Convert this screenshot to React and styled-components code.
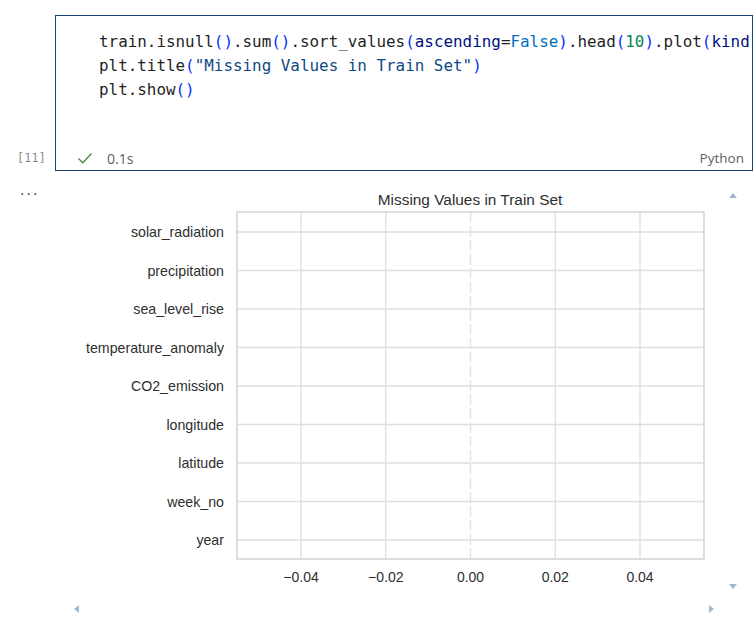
import React from "react";
import styled, { createGlobalStyle } from "styled-components";

const Global = createGlobalStyle`
  html, body { margin: 0; padding: 0; background: #ffffff; }
  body { font-family: "Open Sans", "Noto Sans", sans-serif; }
`;

const Page = styled.div`
  width: 756px;
  height: 625px;
  overflow: hidden;
  padding-top: 15px;
  box-sizing: border-box;
`;

const CellRow = styled.div`
  display: flex;
  align-items: stretch;
`;

const Gutter = styled.div`
  width: 55px;
  flex: none;
  display: flex;
  flex-direction: column;
  justify-content: ${(p) => (p.$top ? "flex-start" : "flex-end")};
  align-items: ${(p) => (p.$top ? "flex-start" : "flex-end")};
  box-sizing: border-box;
  padding: ${(p) => (p.$top ? "1px 0 0 20px" : "0 9px 1px 0")};
`;

const ExecCount = styled.span`
  font-family: "DejaVu Sans Mono", monospace;
  font-size: 11.5px;
  letter-spacing: 0.3px;
  line-height: 24px;
  color: #8a8a8a;
`;

const Ellipsis = styled.span`
  font-family: "Liberation Sans", sans-serif;
  font-size: 16px;
  letter-spacing: 2px;
  color: #444;
  line-height: 16px;
`;

const CellBox = styled.div`
  width: 698px;
  height: 156px;
  box-sizing: border-box;
  border: 1px solid #1d4477;
  display: flex;
  flex-direction: column;
  justify-content: space-between;
  overflow: hidden;
`;

const Code = styled.pre`
  margin: 0;
  padding: 14px 0 0 43px;
  font-family: "DejaVu Sans Mono", monospace;
  font-size: 15.9px;
  line-height: 24px;
  color: #1f1f1f;
  white-space: pre;
  overflow: hidden;
`;

const Tok = styled.span`
  color: ${(p) => p.$c};
`;

const Footer = styled.div`
  height: 24px;
  display: flex;
  align-items: center;
  padding: 0 8px 0 21px;
`;

const Check = styled.svg`
  width: 16px;
  height: 16px;
  flex: none;
`;

const Duration = styled.span`
  margin-left: 14px;
  font-size: 14px;
  color: #5f5f5f;
`;

const Lang = styled.span`
  margin-left: auto;
  font-size: 13.5px;
  color: #5f5f5f;
`;

const OutputRow = styled.div`
  display: flex;
  margin-top: 10px;
`;

const OutputFrame = styled.div`
  display: grid;
  grid-template-columns: 671px 14px;
  grid-template-rows: 420px 16px;
`;

const Chart = styled.svg`
  display: block;
  width: 671px;
  height: 420px;
`;

const VScroll = styled.div`
  display: flex;
  flex-direction: column;
  justify-content: space-between;
  align-items: center;
  padding: 12px 0 12px;
`;

const HScroll = styled.div`
  grid-column: 1 / 3;
  display: flex;
  justify-content: space-between;
  align-items: center;
  padding: 0 26px 0 19px;
`;

const Arrow = styled.span`
  width: 0;
  height: 0;
  border-style: solid;
  border-color: transparent;
  ${(p) =>
    p.$dir === "up"
      ? "border-width: 0 4.5px 5px 4.5px; border-bottom-color: #a3b7cc;"
      : p.$dir === "down"
      ? "border-width: 5px 4.5px 0 4.5px; border-top-color: #a3b7cc;"
      : p.$dir === "left"
      ? "border-width: 4.5px 5px 4.5px 0; border-right-color: #a3b7cc;"
      : "border-width: 4.5px 0 4.5px 5px; border-left-color: #a3b7cc;"}
`;

const labels = [
  "solar_radiation",
  "precipitation",
  "sea_level_rise",
  "temperature_anomaly",
  "CO2_emission",
  "longitude",
  "latitude",
  "week_no",
  "year",
];
const ticks = ["\u22120.04", "\u22120.02", "0.00", "0.02", "0.04"];

const PL = 182;
const PR = 649;
const PT = 31;
const PB = 378;

function MissingChart() {
  return (
    <Chart viewBox="0 0 671 420">
      <text
        x="415"
        y="24"
        textAnchor="middle"
        fontFamily="Liberation Sans, Arial, sans-serif"
        fontSize="15.4"
        fill="#2e2e2e"
      >
        Missing Values in Train Set
      </text>
      {labels.map((l, i) => {
        const y = 51 + i * 38.5;
        return (
          <g key={l}>
            <line x1={PL} x2={PR} y1={y} y2={y} stroke="#dedede" strokeWidth="1.3" />
            <text
              x="169"
              y={y + 5}
              textAnchor="end"
              fontFamily="Liberation Sans, Arial, sans-serif"
              fontSize="14.2"
              fill="#2e2e2e"
            >
              {l}
            </text>
          </g>
        );
      })}
      {ticks.map((t, i) => {
        const x = 246 + i * 84.75;
        return (
          <g key={t}>
            {i === 2 ? (
              <line
                x1={x}
                x2={x}
                y1={PT}
                y2={PB}
                stroke="#e2e2e2"
                strokeWidth="1.4"
                strokeDasharray="11 3"
              />
            ) : (
              <line x1={x} x2={x} y1={PT} y2={PB} stroke="#dedede" strokeWidth="1.3" />
            )}
            <text
              x={x}
              y="401"
              textAnchor="middle"
              fontFamily="Liberation Sans, Arial, sans-serif"
              fontSize="14"
              fill="#2e2e2e"
            >
              {t}
            </text>
          </g>
        );
      })}
      <rect
        x={PL}
        y={PT}
        width={PR - PL}
        height={PB - PT}
        fill="none"
        stroke="#d6d6d6"
        strokeWidth="1.6"
      />
    </Chart>
  );
}

export default function App() {
  const P = "#0431fa";
  return (
    <Page>
      <Global />
      <CellRow>
        <Gutter>
          <ExecCount>[11]</ExecCount>
        </Gutter>
        <CellBox>
          <Code>
            train.isnull<Tok $c={P}>()</Tok>.sum<Tok $c={P}>()</Tok>.sort_values
            <Tok $c={P}>(</Tok>
            <Tok $c="#001080">ascending</Tok>=<Tok $c="#0070c1">False</Tok>
            <Tok $c={P}>)</Tok>.head<Tok $c={P}>(</Tok>
            <Tok $c="#098658">10</Tok>
            <Tok $c={P}>)</Tok>.plot<Tok $c={P}>(</Tok>
            <Tok $c="#001080">kind</Tok>
            {"\n"}plt.title<Tok $c={P}>(</Tok>
            <Tok $c="#0f4a85">"Missing Values in Train Set"</Tok>
            <Tok $c={P}>)</Tok>
            {"\n"}plt.show<Tok $c={P}>()</Tok>
          </Code>
          <Footer>
            <Check viewBox="0 0 16 16">
              <path d="M1.5 8.5 L5.8 12.8 L14.5 3.5" fill="none" stroke="#3c8d3c" strokeWidth="1.3" />
            </Check>
            <Duration>0.1s</Duration>
            <Lang>Python</Lang>
          </Footer>
        </CellBox>
      </CellRow>
      <OutputRow>
        <Gutter $top>
          <Ellipsis>...</Ellipsis>
        </Gutter>
        <OutputFrame>
          <MissingChart />
          <VScroll>
            <Arrow $dir="up" />
            <Arrow $dir="down" />
          </VScroll>
          <HScroll>
            <Arrow $dir="left" />
            <Arrow $dir="right" />
          </HScroll>
        </OutputFrame>
      </OutputRow>
    </Page>
  );
}
